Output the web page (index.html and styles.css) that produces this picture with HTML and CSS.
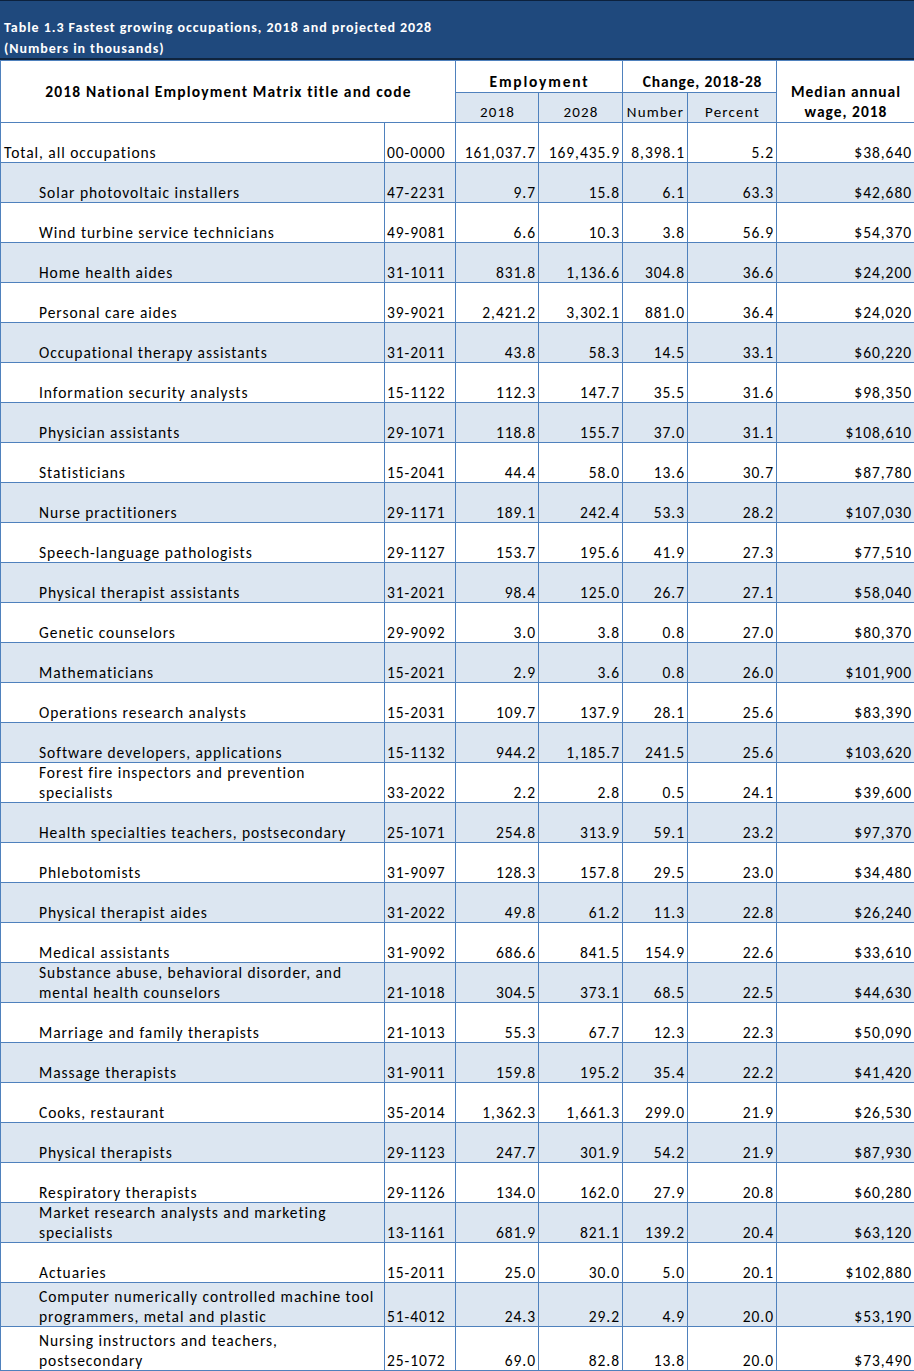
FILE: index.html
```html
<!DOCTYPE html>
<html lang="en">
<head>
<meta charset="utf-8">
<title>Table 1.3 Fastest growing occupations</title>
<link rel="stylesheet" href="styles.css">
</head>
<body>
<div class="sheet">
  <div class="title-bar">
    <div>Table 1.3 Fastest growing occupations, 2018 and projected 2028</div>
    <div>(Numbers in thousands)</div>
  </div>
  <table class="grid">
    <colgroup>
      <col class="c-title"><col class="c-code"><col class="c-num"><col class="c-num2"><col class="c-chg"><col class="c-pct"><col class="c-wage">
    </colgroup>
    <thead>
      <tr class="h1">
        <th colspan="2" rowspan="2" class="hmain">2018 National Employment Matrix title and code</th>
        <th colspan="2" class="hgroup emp">Employment</th>
        <th colspan="2" class="hgroup chg">Change, 2018-28</th>
        <th rowspan="2" class="hwage">Median annual<br>wage, 2018</th>
      </tr>
      <tr class="h2">
        <th class="hsub">2018</th>
        <th class="hsub">2028</th>
        <th class="hsub">Number</th>
        <th class="hsub">Percent</th>
      </tr>
    </thead>
    <tbody>
      <tr><td class="name total">Total, all occupations</td><td class="code">00-0000</td><td>161,037.7</td><td>169,435.9</td><td>8,398.1</td><td>5.2</td><td>$38,640</td></tr>
      <tr class="alt"><td class="name">Solar photovoltaic installers</td><td class="code">47-2231</td><td>9.7</td><td>15.8</td><td>6.1</td><td>63.3</td><td>$42,680</td></tr>
      <tr><td class="name">Wind turbine service technicians</td><td class="code">49-9081</td><td>6.6</td><td>10.3</td><td>3.8</td><td>56.9</td><td>$54,370</td></tr>
      <tr class="alt"><td class="name">Home health aides</td><td class="code">31-1011</td><td>831.8</td><td>1,136.6</td><td>304.8</td><td>36.6</td><td>$24,200</td></tr>
      <tr><td class="name">Personal care aides</td><td class="code">39-9021</td><td>2,421.2</td><td>3,302.1</td><td>881.0</td><td>36.4</td><td>$24,020</td></tr>
      <tr class="alt"><td class="name">Occupational therapy assistants</td><td class="code">31-2011</td><td>43.8</td><td>58.3</td><td>14.5</td><td>33.1</td><td>$60,220</td></tr>
      <tr><td class="name">Information security analysts</td><td class="code">15-1122</td><td>112.3</td><td>147.7</td><td>35.5</td><td>31.6</td><td>$98,350</td></tr>
      <tr class="alt"><td class="name">Physician assistants</td><td class="code">29-1071</td><td>118.8</td><td>155.7</td><td>37.0</td><td>31.1</td><td>$108,610</td></tr>
      <tr><td class="name">Statisticians</td><td class="code">15-2041</td><td>44.4</td><td>58.0</td><td>13.6</td><td>30.7</td><td>$87,780</td></tr>
      <tr class="alt"><td class="name">Nurse practitioners</td><td class="code">29-1171</td><td>189.1</td><td>242.4</td><td>53.3</td><td>28.2</td><td>$107,030</td></tr>
      <tr><td class="name">Speech-language pathologists</td><td class="code">29-1127</td><td>153.7</td><td>195.6</td><td>41.9</td><td>27.3</td><td>$77,510</td></tr>
      <tr class="alt"><td class="name">Physical therapist assistants</td><td class="code">31-2021</td><td>98.4</td><td>125.0</td><td>26.7</td><td>27.1</td><td>$58,040</td></tr>
      <tr><td class="name">Genetic counselors</td><td class="code">29-9092</td><td>3.0</td><td>3.8</td><td>0.8</td><td>27.0</td><td>$80,370</td></tr>
      <tr class="alt"><td class="name">Mathematicians</td><td class="code">15-2021</td><td>2.9</td><td>3.6</td><td>0.8</td><td>26.0</td><td>$101,900</td></tr>
      <tr><td class="name">Operations research analysts</td><td class="code">15-2031</td><td>109.7</td><td>137.9</td><td>28.1</td><td>25.6</td><td>$83,390</td></tr>
      <tr class="alt"><td class="name">Software developers, applications</td><td class="code">15-1132</td><td>944.2</td><td>1,185.7</td><td>241.5</td><td>25.6</td><td>$103,620</td></tr>
      <tr><td class="name">Forest fire inspectors and prevention<br>specialists</td><td class="code">33-2022</td><td>2.2</td><td>2.8</td><td>0.5</td><td>24.1</td><td>$39,600</td></tr>
      <tr class="alt"><td class="name">Health specialties teachers, postsecondary</td><td class="code">25-1071</td><td>254.8</td><td>313.9</td><td>59.1</td><td>23.2</td><td>$97,370</td></tr>
      <tr><td class="name">Phlebotomists</td><td class="code">31-9097</td><td>128.3</td><td>157.8</td><td>29.5</td><td>23.0</td><td>$34,480</td></tr>
      <tr class="alt"><td class="name">Physical therapist aides</td><td class="code">31-2022</td><td>49.8</td><td>61.2</td><td>11.3</td><td>22.8</td><td>$26,240</td></tr>
      <tr><td class="name">Medical assistants</td><td class="code">31-9092</td><td>686.6</td><td>841.5</td><td>154.9</td><td>22.6</td><td>$33,610</td></tr>
      <tr class="alt"><td class="name">Substance abuse, behavioral disorder, and<br>mental health counselors</td><td class="code">21-1018</td><td>304.5</td><td>373.1</td><td>68.5</td><td>22.5</td><td>$44,630</td></tr>
      <tr><td class="name">Marriage and family therapists</td><td class="code">21-1013</td><td>55.3</td><td>67.7</td><td>12.3</td><td>22.3</td><td>$50,090</td></tr>
      <tr class="alt"><td class="name">Massage therapists</td><td class="code">31-9011</td><td>159.8</td><td>195.2</td><td>35.4</td><td>22.2</td><td>$41,420</td></tr>
      <tr><td class="name">Cooks, restaurant</td><td class="code">35-2014</td><td>1,362.3</td><td>1,661.3</td><td>299.0</td><td>21.9</td><td>$26,530</td></tr>
      <tr class="alt"><td class="name">Physical therapists</td><td class="code">29-1123</td><td>247.7</td><td>301.9</td><td>54.2</td><td>21.9</td><td>$87,930</td></tr>
      <tr><td class="name">Respiratory therapists</td><td class="code">29-1126</td><td>134.0</td><td>162.0</td><td>27.9</td><td>20.8</td><td>$60,280</td></tr>
      <tr class="alt"><td class="name">Market research analysts and marketing<br>specialists</td><td class="code">13-1161</td><td>681.9</td><td>821.1</td><td>139.2</td><td>20.4</td><td>$63,120</td></tr>
      <tr><td class="name">Actuaries</td><td class="code">15-2011</td><td>25.0</td><td>30.0</td><td>5.0</td><td>20.1</td><td>$102,880</td></tr>
      <tr class="alt tall"><td class="name">Computer numerically controlled machine tool<br>programmers, metal and plastic</td><td class="code">51-4012</td><td>24.3</td><td>29.2</td><td>4.9</td><td>20.0</td><td>$53,190</td></tr>
      <tr class="tall"><td class="name">Nursing instructors and teachers,<br>postsecondary</td><td class="code">25-1072</td><td>69.0</td><td>82.8</td><td>13.8</td><td>20.0</td><td>$73,490</td></tr>
    </tbody>
  </table>
</div>
</body>
</html>
```

FILE: styles.css
```css
html, body {
  margin: 0;
  padding: 0;
  background: #ffffff;
}

body {
  font-family: Calibri, Carlito, Lato, "Liberation Sans", sans-serif;
  color: #000000;
}

.sheet {
  width: 914px;
}

.title-bar {
  box-sizing: border-box;
  height: 60px;
  background: #1f497d;
  color: #ffffff;
  font-weight: 700;
  font-size: 14px;
  letter-spacing: 0.95px;
  line-height: 21px;
  padding: 16px 0 0 4px;
  border-top: 1px solid #0c213d;
  border-bottom: 2px solid #0f243e;
  white-space: nowrap;
}

.grid {
  width: 914px;
  border-collapse: collapse;
  table-layout: fixed;
  font-size: 15.5px;
  letter-spacing: 0.95px;
}

.c-title { width: 384px; }
.c-code { width: 71px; }
.c-num { width: 83px; }
.c-num2 { width: 84px; }
.c-chg { width: 65px; }
.c-pct { width: 89px; }
.c-wage { width: 138px; }

.grid th,
.grid td {
  border: 1px solid #4f81bd;
  padding: 0 2px 0 3px;
  white-space: nowrap;
  overflow: hidden;
}

.grid th {
  font-weight: 700;
  text-align: center;
}

.h1 {
  height: 32px;
}

.h2 {
  height: 30px;
}

.hmain {
  font-size: 15.5px;
  letter-spacing: 1.15px;
  vertical-align: middle;
  border-bottom: 2px solid #4f81bd;
}

.hgroup {
  font-size: 15.5px;
  vertical-align: bottom;
  line-height: 20px;
  padding-bottom: 1px;
}

.hgroup.emp {
  letter-spacing: 1.8px;
}

.hgroup.chg {
  letter-spacing: 0.85px;
  padding-left: 8px;
}

.hwage {
  font-size: 15.5px;
  letter-spacing: 1px;
  line-height: 20px;
  vertical-align: bottom;
  border-bottom: 2px solid #4f81bd;
  padding-bottom: 0;
}

.hsub {
  font-weight: 400 !important;
  font-size: 15px;
  letter-spacing: 1.2px;
  background: #dce6f1;
  vertical-align: bottom;
  line-height: 20px;
  padding-bottom: 0;
  border-bottom: 2px solid #4f81bd;
}

.grid tbody tr {
  height: 40px;
}

.grid tbody tr.tall {
  height: 44px;
}

.grid tbody td {
  vertical-align: bottom;
  line-height: 19.5px;
  text-align: right;
  padding-bottom: 0;
}

.grid tbody tr.alt td {
  background: #dce6f1;
}

.grid td.name {
  text-align: left;
  padding-left: 38px;
}

.grid td.name.total {
  padding-left: 3px;
}

.grid td.code {
  text-align: left;
  padding-left: 2px;
}
```
